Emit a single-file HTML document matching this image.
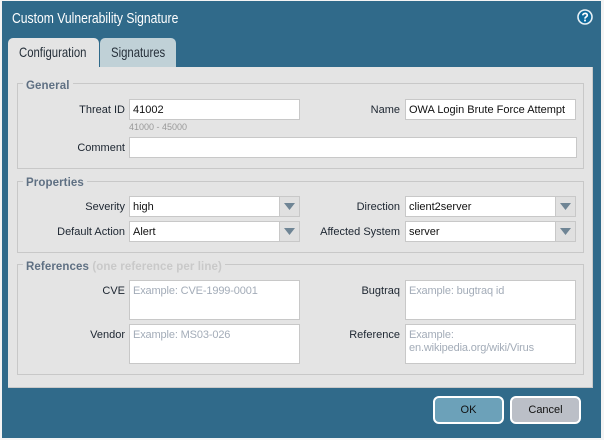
<!DOCTYPE html>
<html><head><meta charset="utf-8"><style>
html,body{margin:0;padding:0;width:604px;height:440px;overflow:hidden;background:#f4f4f4}
body{position:relative;font:11px "Liberation Sans",sans-serif;color:#1c2530}
div,span{position:absolute;box-sizing:border-box;white-space:nowrap}
.win{left:2px;top:1px;width:599px;height:437px;background:#306a8a}
.title{left:12px;top:10px;color:#fff;font-size:15px;line-height:18px;transform:scaleX(.81);transform-origin:0 0}
.tab{top:38px;height:29px;border-radius:5px 5px 0 0}
.tt{top:0;font-size:14px;line-height:28px;transform:scaleX(.81);transform-origin:0 0;color:#26303a}
.panel{left:8px;top:67px;width:585px;height:321px;background:#e4e4e4;border-right:1px solid #c9c9c9;border-bottom:1px solid #c9c9c9}
.fs{left:17px;width:567px;border:1px solid #c8c8c8}
.lg{left:23px;background:#e4e4e4;padding:0 3px;font-weight:bold;font-size:11.5px;line-height:14px;color:#5f7083;letter-spacing:.1px}
.lb{width:120px;text-align:right;line-height:14px}
.lr{width:120px;left:280px;text-align:right;line-height:14px}
.in{background:#fff;border:1px solid #c8c8c8;line-height:21px;padding-left:3px;color:#111}
.ta{background:#fff;border:1px solid #c8c8c8;line-height:13px;padding:4px 0 0 3px;color:#a3acb8;letter-spacing:-.14px;white-space:pre}
.ar{right:0;top:0;width:20px;height:100%;background:#e0e0e0;border-left:1px solid #c8c8c8}
.ar svg{position:absolute;left:4px;top:6px}
.btn{top:396px;height:28px;border:2px solid #fff;border-radius:6px;text-align:center;line-height:25px;color:#111}
</style></head><body>
<div class="win"></div>
<div class="title">Custom Vulnerability Signature</div>
<svg style="position:absolute;left:577px;top:9px" width="16" height="16" viewBox="0 0 16 16"><circle cx="8" cy="8" r="7" fill="#0f6a9c" stroke="#e8f0f4" stroke-width="1.6"/><path d="M5.8 6.3C5.9 3.8 10.3 3.8 10.3 6.2C10.3 7.8 8 7.8 8 9.6" fill="none" stroke="#fff" stroke-width="1.7"/><rect x="7.1" y="10.6" width="1.8" height="1.8" fill="#fff"/></svg>
<div class="tab" style="left:8px;width:91px;background:#e4e4e4"><div class="tt" style="left:11px">Configuration</div></div>
<div class="tab" style="left:100px;width:76px;background:#c0d1d7"><div class="tt" style="left:11px">Signatures</div></div>
<div class="panel"></div>

<div class="fs" style="top:83px;height:86px"></div>
<div class="lg" style="top:79px">General</div>
<div class="lb" style="left:5px;top:103px">Threat ID</div>
<div class="in" style="left:129px;top:99px;width:171px;height:21px">41002</div>
<div class="lr" style="top:103px">Name</div>
<div class="in" style="left:405px;top:99px;width:171px;height:21px">OWA Login Brute Force Attempt</div>
<div style="left:129px;top:121px;font-size:9px;line-height:13px;color:#999">41000 - 45000</div>
<div class="lb" style="left:5px;top:141px">Comment</div>
<div class="in" style="left:129px;top:137px;width:448px;height:21px"></div>

<div class="fs" style="top:181px;height:72px"></div>
<div class="lg" style="top:176px">Properties</div>
<div class="lb" style="left:5px;top:200px">Severity</div>
<div class="in" style="left:129px;top:196px;width:171px;height:21px">high<div class="ar"><svg width="11" height="8"><path d="M0 0H11L5.5 7Z" fill="#6f8595"/></svg></div></div>
<div class="lb" style="left:5px;top:225px">Default Action</div>
<div class="in" style="left:129px;top:221px;width:171px;height:21px">Alert<div class="ar"><svg width="11" height="8"><path d="M0 0H11L5.5 7Z" fill="#6f8595"/></svg></div></div>
<div class="lr" style="top:200px">Direction</div>
<div class="in" style="left:405px;top:196px;width:171px;height:21px">client2server<div class="ar"><svg width="11" height="8"><path d="M0 0H11L5.5 7Z" fill="#6f8595"/></svg></div></div>
<div class="lr" style="top:225px">Affected System</div>
<div class="in" style="left:405px;top:221px;width:171px;height:21px">server<div class="ar"><svg width="11" height="8"><path d="M0 0H11L5.5 7Z" fill="#6f8595"/></svg></div></div>

<div class="fs" style="top:264px;height:111px"></div>
<div class="lg" style="top:260px">References <span style="position:static;color:#c9c9c9">(one reference per line)</span></div>
<div class="lb" style="left:5px;top:284px">CVE</div>
<div class="ta" style="left:129px;top:280px;width:171px;height:40px">Example: CVE-1999-0001</div>
<div class="lb" style="left:5px;top:328px">Vendor</div>
<div class="ta" style="left:129px;top:324px;width:171px;height:40px">Example: MS03-026</div>
<div class="lr" style="top:284px">Bugtraq</div>
<div class="ta" style="left:405px;top:280px;width:171px;height:40px">Example: bugtraq id</div>
<div class="lr" style="top:328px">Reference</div>
<div class="ta" style="left:405px;top:324px;width:171px;height:40px">Example:
en.wikipedia.org/wiki/Virus</div>

<div class="btn" style="left:433px;width:71px;background:#6ca1b9">OK</div>
<div class="btn" style="left:510px;width:71px;background:#bbbfc7">Cancel</div>
</body></html>
